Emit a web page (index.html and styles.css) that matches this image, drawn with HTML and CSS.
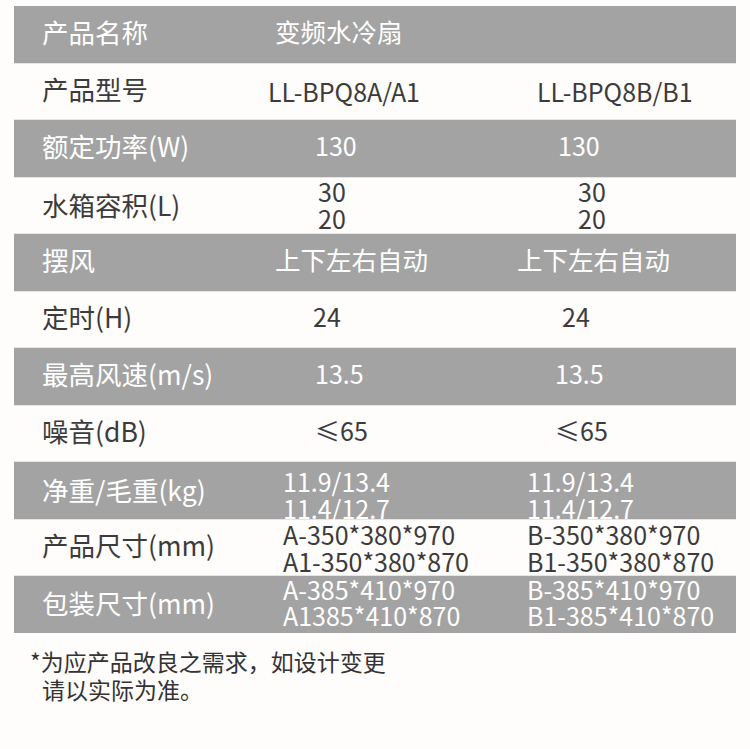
FILE: index.html
```html
<!DOCTYPE html>
<html lang="zh">
<head>
<meta charset="utf-8">
<title>变频水冷扇 参数</title>
<link rel="stylesheet" href="styles.css">
</head>
<body>
<div class="spec">
  <div class="row gray r-name"><div class="label">产品名称</div><div class="val cjk">变频水冷扇</div></div>
  <div class="row r-model"><div class="label">产品型号</div><div class="val">LL-BPQ8A/A1</div><div class="val">LL-BPQ8B/B1</div></div>
  <div class="row gray r-power"><div class="label">额定功率(W)</div><div class="val">130</div><div class="val">130</div></div>
  <div class="row r-tank"><div class="label">水箱容积(L)</div><div class="val multi up">30<br>20</div><div class="val multi up">30<br>20</div></div>
  <div class="row gray r-swing"><div class="label">摆风</div><div class="val cjk">上下左右自动</div><div class="val cjk">上下左右自动</div></div>
  <div class="row r-timer"><div class="label">定时(H)</div><div class="val">24</div><div class="val">24</div></div>
  <div class="row gray r-speed"><div class="label">最高风速(m/s)</div><div class="val">13.5</div><div class="val">13.5</div></div>
  <div class="row r-noise"><div class="label">噪音(dB)</div><div class="val">≤65</div><div class="val">≤65</div></div>
  <div class="row gray r-dim"><div class="label">净重/毛重(kg)</div><div class="val multi low">11.9/13.4<br>11.4/12.7</div><div class="val multi low">11.9/13.4<br>11.4/12.7</div></div>
  <div class="row r-dim"><div class="label">产品尺寸(mm)</div><div class="val multi">A-350*380*970<br>A1-350*380*870</div><div class="val multi">B-350*380*970<br>B1-350*380*870</div></div>
  <div class="row gray r-dim"><div class="label">包装尺寸(mm)</div><div class="val multi tight">A-385*410*970<br>A1385*410*870</div><div class="val multi tight">B-385*410*970<br>B1-385*410*870</div></div>
</div>
<p class="note">*为应产品改良之需求，如设计变更<br><span class="indent">请以实际为准。</span></p>
</body>
</html>
```
FILE: styles.css
```css
html, body {
  margin: 0;
  padding: 0;
  background: #fffcfc;
}
body {
  font-family: "Noto Sans CJK SC", "Noto Sans", sans-serif;
  color: #3b3b3b;
}
.spec {
  margin: 6px 0 0 14px;
  width: 722px;
}
.row {
  display: grid;
  height: 57px;
  align-items: center;
  font-size: 25px;
  white-space: nowrap;
  box-sizing: border-box;
}
.row.gray {
  background: #a3a3a3;
  color: #ffffff;
}
.row:not(.gray) {
  border-top: 1px solid #e6e4e4;
  border-bottom: 1px solid #e6e4e4;
}
.label {
  padding-left: 28px;
  padding-bottom: 6px;
  font-size: 26.5px;
}
.val {
  padding-bottom: 8px;
}
.r-model .val {
  padding-bottom: 2px;
}
.cjk {
  font-size: 25.5px;
}
.multi {
  line-height: 27px;
  padding-bottom: 0;
  padding-top: 1px;
}
.multi.up {
  padding-top: 0;
  padding-bottom: 4px;
}
.multi.low {
  padding-top: 6px;
}
.multi.tight {
  line-height: 26px;
  padding-top: 0;
  padding-bottom: 6px;
}
.r-name  { grid-template-columns: 261px 1fr; }
.r-model { grid-template-columns: 254px 269px 1fr; }
.r-power { grid-template-columns: 301px 243px 1fr; }
.r-tank  { grid-template-columns: 304px 260px 1fr; }
.r-swing { grid-template-columns: 261px 242px 1fr; }
.r-timer { grid-template-columns: 299px 249px 1fr; }
.r-speed { grid-template-columns: 301px 240px 1fr; }
.r-noise { grid-template-columns: 301px 240px 1fr; }
.r-dim   { grid-template-columns: 269px 244px 1fr; }
.note {
  margin: 14px 0 0 30px;
  font-size: 23px;
  line-height: 28px;
  color: #333333;
}
.indent {
  padding-left: 12px;
}
```
